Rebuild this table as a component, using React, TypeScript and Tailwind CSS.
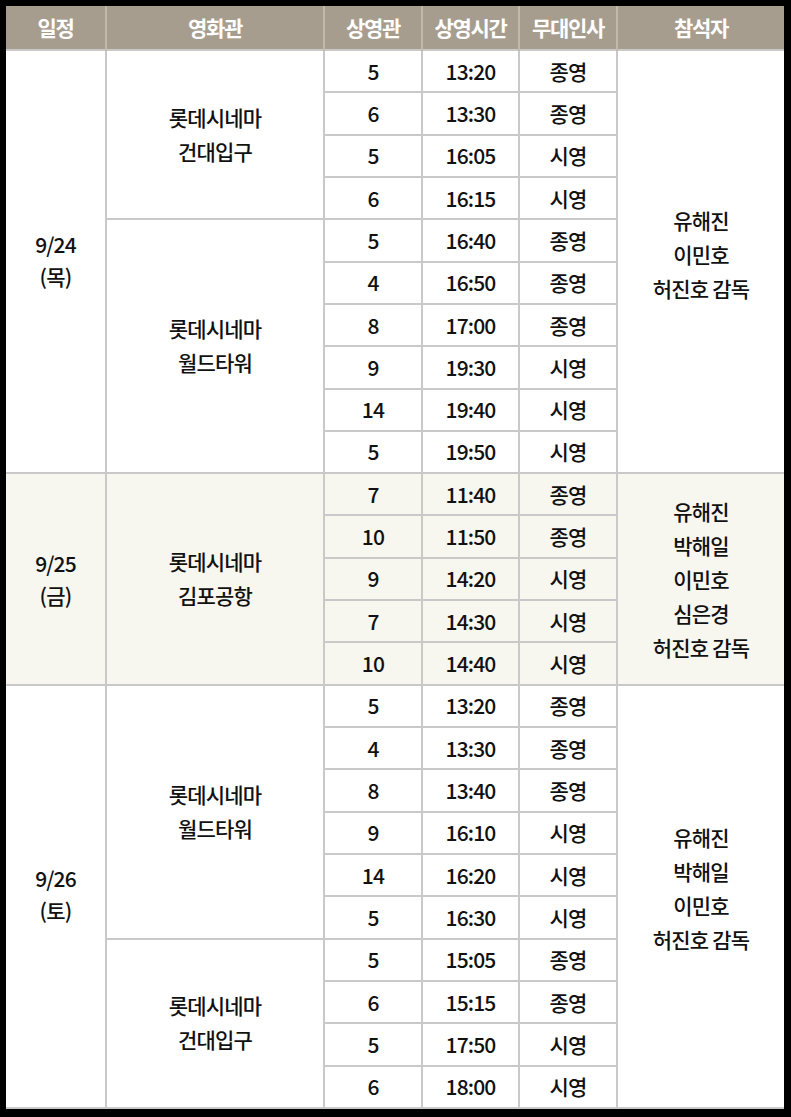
import React from 'react';

type Show = { hall: string; time: string; kind: string };
type Venue = { name: string[]; shows: Show[] };
type Day = { date: string; dow: string; venues: Venue[]; guests: string[]; shaded?: boolean; lift?: boolean };

const s = (hall: string, time: string, kind: string): Show => ({ hall, time, kind });

const days: Day[] = [
  {
    date: '9/24',
    dow: '(목)',
    lift: true,
    guests: ['유해진', '이민호', '허진호 감독'],
    venues: [
      { name: ['롯데시네마', '건대입구'], shows: [s('5', '13:20', '종영'), s('6', '13:30', '종영'), s('5', '16:05', '시영'), s('6', '16:15', '시영')] },
      {
        name: ['롯데시네마', '월드타워'],
        shows: [s('5', '16:40', '종영'), s('4', '16:50', '종영'), s('8', '17:00', '종영'), s('9', '19:30', '시영'), s('14', '19:40', '시영'), s('5', '19:50', '시영')],
      },
    ],
  },
  {
    date: '9/25',
    dow: '(금)',
    shaded: true,
    guests: ['유해진', '박해일', '이민호', '심은경', '허진호 감독'],
    venues: [
      { name: ['롯데시네마', '김포공항'], shows: [s('7', '11:40', '종영'), s('10', '11:50', '종영'), s('9', '14:20', '시영'), s('7', '14:30', '시영'), s('10', '14:40', '시영')] },
    ],
  },
  {
    date: '9/26',
    dow: '(토)',
    lift: true,
    guests: ['유해진', '박해일', '이민호', '허진호 감독'],
    venues: [
      {
        name: ['롯데시네마', '월드타워'],
        shows: [s('5', '13:20', '종영'), s('4', '13:30', '종영'), s('8', '13:40', '종영'), s('9', '16:10', '시영'), s('14', '16:20', '시영'), s('5', '16:30', '시영')],
      },
      { name: ['롯데시네마', '건대입구'], shows: [s('5', '15:05', '종영'), s('6', '15:15', '종영'), s('5', '17:50', '시영'), s('6', '18:00', '시영')] },
    ],
  },
];

const cell = 'border-2 border-[#c9c9c9] text-center align-middle p-0';
const head = ['일정', '영화관', '상영관', '상영시간', '무대인사', '참석자'];

export default function App() {
  return (
    <div
      className="w-[791px] h-[1117px] bg-black pt-[6px] pl-[6px] overflow-hidden"
      style={{ fontFamily: '"Noto Sans CJK KR", "Noto Sans", sans-serif' }}
    >
      <table className="w-[778px] table-fixed border-collapse text-[21px] font-medium text-[#111] tracking-[-0.04em]">
        <colgroup>
          <col className="w-[100px]" />
          <col className="w-[218px]" />
          <col className="w-[98px]" />
          <col className="w-[97px]" />
          <col className="w-[98px]" />
          <col className="w-[167px]" />
        </colgroup>
        <thead>
          <tr className="h-[44px] bg-[#a79d8e]">
            {head.map((h, i) => (
              <th
                key={h}
                className={`font-semibold text-white text-[21px] tracking-[-0.06em] p-0 border-x-2 border-[#c2b9ac] ${i === 0 ? 'border-l-0' : ''} ${i === 5 ? 'border-r-0' : ''}`}
              >
                {h}
              </th>
            ))}
          </tr>
        </thead>
        <tbody>
          {days.map((d) => {
            const total = d.venues.reduce((n, v) => n + v.shows.length, 0);
            const bg = d.shaded ? 'bg-[#f7f6ef]' : 'bg-white';
            return d.venues.map((v, vi) =>
              v.shows.map((sh, si) => (
                <tr key={`${d.date}-${vi}-${si}`} className={`h-[42.32px] ${bg}`}>
                  {vi === 0 && si === 0 && (
                    <td rowSpan={total} className={`${cell} border-l-0 leading-[32px] ${d.lift ? 'pb-[4px]' : ''}`}>
                      <div>{d.date}</div>
                      <div>{d.dow}</div>
                    </td>
                  )}
                  {si === 0 && (
                    <td rowSpan={v.shows.length} className={`${cell} leading-[34px] pb-[2px]`}>
                      {v.name.map((n) => (
                        <div key={n}>{n}</div>
                      ))}
                    </td>
                  )}
                  <td className={`${cell} leading-none`}>{sh.hall}</td>
                  <td className={`${cell} leading-none`}>{sh.time}</td>
                  <td className={`${cell} leading-none`}>{sh.kind}</td>
                  {vi === 0 && si === 0 && (
                    <td rowSpan={total} className={`${cell} border-r-0 leading-[34px] ${d.lift ? 'pb-[16px]' : ''}`}>
                      {d.guests.map((g) => (
                        <div key={g}>{g}</div>
                      ))}
                    </td>
                  )}
                </tr>
              ))
            );
          })}
        </tbody>
      </table>
    </div>
  );
}
